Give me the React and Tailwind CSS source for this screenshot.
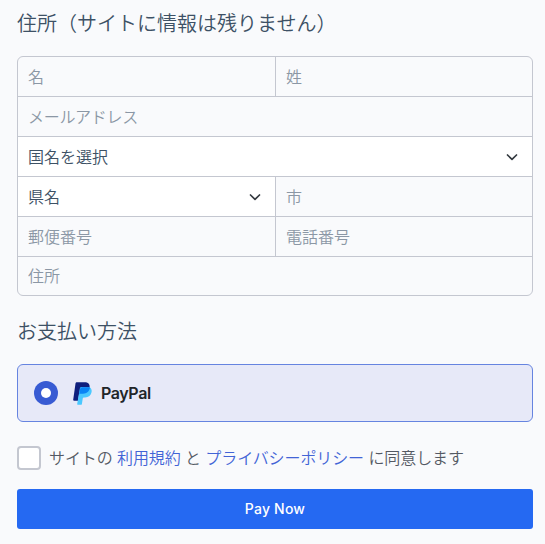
import React from 'react';

const PayPalLogo = () => (
  <svg width="19" height="23" viewBox="0 0 19 23" fill="none">
    <path
      d="M4 0.300h8c3.300 0 5 2.200 4.600 5.200-.5 4-3.300 6.200-7 6.200H7.100c-.6 0-1 .4-1.100 1L5 18.700H.9c-.5 0-.8-.4-.7-.9L2.500 1.500C2.600.8 3.200.3 4 .3z"
      fill="#0f1f7d"
    />
    <path
      d="M16.600 5.200c1.600.9 2.400 2.700 2 4.900-.6 3.500-3 5.300-6.500 5.300h-1.300c-.5 0-.9.4-1 .9l-.9 5.600c-.1.6-.5.9-1 .9H4.700c-.4 0-.6-.3-.5-.7L6.800 6.800c.1-1 .9-1.700 1.900-1.700z"
      fill="#4ac8ff"
    />
    <path
      d="M6.200 12.700l.9-5.700c.2-1.100.9-1.800 1.900-1.800h4.400c1.300 0 2.600.1 3.600.4-.6 3.900-3.300 6.100-7 6.100H7.300c-.6 0-1 .4-1.100 1z"
      fill="#0a84f5"
    />
  </svg>
);

const Chevron = () => (
  <svg width="16" height="16" viewBox="0 0 16 16" fill="none" className="text-[#343a40]">
    <path d="M3.500 6 8 10.300 12.500 6" stroke="currentColor" strokeWidth="1.700" strokeLinecap="round" strokeLinejoin="round" />
  </svg>
);

const Field = ({ placeholder, className = '' }) => (
  <input
    type="text"
    placeholder={placeholder}
    className={`block h-full w-full min-w-0 border-[#c4c7d0] bg-transparent px-2.5 outline-none placeholder:text-[#8b97a5] ${className}`}
  />
);

const SelectField = ({ label, className = '' }) => (
  <button
    type="button"
    className={`flex h-full w-full items-center justify-between border-b border-[#c4c7d0] bg-white pl-2.5 pr-3 text-left text-[#3d5165] ${className}`}
  >
    <span>{label}</span>
    <Chevron />
  </button>
);

const App = () => {
  return (
    <div className="min-h-screen bg-[#f9fafc] pl-[17px] pr-3 pt-[9px] font-['Inter','Noto_Sans_CJK_JP',sans-serif] font-[350] text-[#3d5165]">
      {/* Address */}
      <h2 className="mb-[17px] h-[30px] text-xl leading-[30px] font-[350]">
        住所（サイトに情報は残りません）
      </h2>
      <div className="grid h-60 grid-cols-[258px_1fr] grid-rows-[repeat(5,40px)_38px] overflow-hidden rounded-md border border-[#c4c7d0] text-base">
        <Field placeholder="名" className="border-r border-b" />
        <Field placeholder="姓" className="border-b" />
        <Field placeholder="メールアドレス" className="col-span-2 border-b tracking-[-0.3px]" />
        <SelectField label="国名を選択" className="col-span-2" />
        <SelectField label="県名" className="border-r" />
        <Field placeholder="市" className="border-b" />
        <Field placeholder="郵便番号" className="border-r border-b" />
        <Field placeholder="電話番号" className="border-b" />
        <Field placeholder="住所" className="col-span-2" />
      </div>

      {/* Payment method */}
      <h2 className="mt-[21px] mb-[17px] h-[30px] text-xl leading-[30px] font-[350]">お支払い方法</h2>
      <div className="flex h-[58px] items-center rounded-md border border-[#6684e0] bg-[#e7e9f8] pl-4">
        <span className="flex size-6 items-center justify-center rounded-full bg-[#385bd3]">
          <span className="size-2.5 rounded-full bg-white" />
        </span>
        <span className="ml-[15px]">
          <PayPalLogo />
        </span>
        <span className="ml-[9px] text-base font-semibold tracking-[-0.4px] text-[#212529]">PayPal</span>
      </div>

      {/* Terms */}
      <label className="mt-6 flex h-6 items-center text-base tracking-[-0.1px] text-[#545963]">
        <span className="mr-2 size-6 rounded border-2 border-[#c4c7d0] bg-white" />
        <span className="whitespace-pre">
          サイトの <a className="text-[#4264d6]">利用規約</a> と{' '}
          <a className="text-[#4264d6]">プライバシーポリシー</a> に同意します
        </span>
      </label>
      <button
        type="button"
        className="mt-[19px] block h-10 w-full rounded-[3px] bg-[#2569f2] text-sm font-medium tracking-[0.2px] text-white"
      >
        Pay Now
      </button>
    </div>
  );
};

export default App;
